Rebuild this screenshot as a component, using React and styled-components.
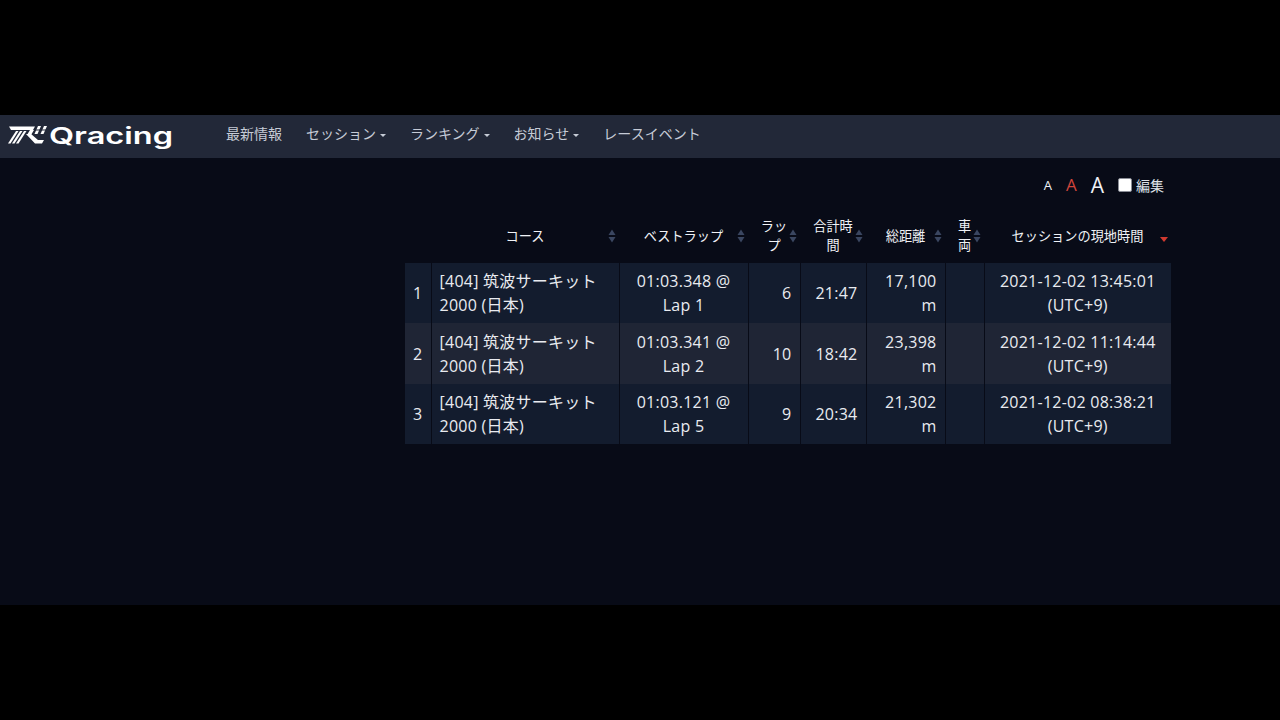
import React from "react";
import styled, { createGlobalStyle } from "styled-components";

const GlobalStyle = createGlobalStyle`
  html, body {
    margin: 0;
    padding: 0;
    background: #000;
  }
  body {
    font-family: "Open Sans", "Noto Sans CJK JP", sans-serif;
  }
`;

const Screen = styled.div`
  width: 1280px;
  height: 720px;
  padding: 115px 0;
  box-sizing: border-box;
  overflow: hidden;
`;

const Frame = styled.div`
  height: 490px;
  background: #080b17;
  display: flex;
  flex-direction: column;
`;

const Nav = styled.nav`
  height: 43px;
  flex-shrink: 0;
  background: #222838;
  display: flex;
  align-items: center;
  padding-left: 8px;
`;

const Brand = styled.div`
  width: 218px;
  display: flex;
  align-items: center;
  flex-shrink: 0;
`;

const BrandText = styled.text`
  font-family: "Inter", "Liberation Sans", sans-serif;
  font-size: 23px;
  font-weight: 600;
  fill: #fff;
`;

const NavItem = styled.a`
  color: #c6cbd6;
  font-size: 14px;
  line-height: 20px;
  margin-right: 24px;
  margin-top: -6px;
  display: flex;
  align-items: center;
  white-space: nowrap;
`;

const Caret = styled.span`
  width: 0;
  height: 0;
  margin-left: 4px;
  margin-top: 3px;
  border-top: 3px solid #c6cbd6;
  border-left: 3px solid transparent;
  border-right: 3px solid transparent;
`;

const Content = styled.main`
  padding: 15px 109px 0 405px;
`;

const Tools = styled.div`
  height: 24px;
  display: flex;
  align-items: center;
  justify-content: flex-end;
  color: #e6e8ee;
  padding-right: 7px;
  margin-bottom: 12px;
`;

const SizeButton = styled.span`
  font-size: ${(p) => p.size}px;
  color: ${(p) => (p.active ? "#d0453c" : "#f0f2f6")};
  margin-right: 14px;
  line-height: 24px;
`;

const Check = styled.span`
  width: 14px;
  height: 14px;
  background: #fff;
  border: 1px solid #8a8d96;
  border-radius: 2px;
  box-sizing: border-box;
  margin-right: 4px;
`;

const EditLabel = styled.span`
  font-size: 14px;
  color: #dfe2e8;
`;

const Table = styled.table`
  width: 766px;
  table-layout: fixed;
  border-collapse: collapse;
  color: #e9ebf0;
`;

const Th = styled.th`
  position: relative;
  height: 54px;
  padding: 0 8px;
  font-size: 13.2px;
  line-height: 19px;
  font-weight: 400;
  text-align: center;
  color: #f0f2f6;
`;

const SortIcon = styled.svg`
  position: absolute;
  right: 3px;
  top: 20px;
  width: 8px;
  height: 14px;
`;

const Row = styled.tr`
  height: ${(p) => (p.alt ? 61 : 60)}px;
  background: ${(p) => (p.alt ? "#1f2535" : "#131c2e")};
`;

const Td = styled.td`
  padding: 0 8px;
  font-size: 16px;
  line-height: 24px;
  letter-spacing: 0.25px;
  text-align: ${(p) => p.align || "left"};
  border-left: 1px solid #080b17;
  &:first-child {
    border-left: none;
  }
`;

const columns = [
  { width: 26, label: "" },
  { width: 188, label: "コース" },
  { width: 129, label: "ベストラップ" },
  { width: 52, label: "ラップ" },
  { width: 66, label: "合計時間" },
  { width: 79, label: "総距離" },
  { width: 39, label: "車両" },
  { width: 187, label: "セッションの現地時間", sorted: true },
];

const sessions = [
  { lap: "01:03.348 @ Lap 1", laps: 6, total: "21:47", dist: "17,100 m", time: "2021-12-02 13:45:01 (UTC+9)" },
  { lap: "01:03.341 @ Lap 2", laps: 10, total: "18:42", dist: "23,398 m", time: "2021-12-02 11:14:44 (UTC+9)" },
  { lap: "01:03.121 @ Lap 5", laps: 9, total: "20:34", dist: "21,302 m", time: "2021-12-02 08:38:21 (UTC+9)" },
];

function Logo() {
  return (
    <svg width="170" height="28" viewBox="0 0 170 28">
      <g fill="#fff">
        <polygon points="1,3.5 27,3.5 25,7 3,7" />
        <polygon points="8,8 10.5,8 2.5,20.5 0,20.5" />
        <polygon points="12,8 14.5,8 6.5,20.5 4,20.5" />
        <polygon points="16,8 18.5,8 10.5,20.5 8,20.5" />
        <polygon points="22,7 26,7 23,12 19,12" />
        <polygon points="18,11 23,11 30,17 36,17 34,20.5 27,20.5" />
        <polygon points="30,3 33,3 29.5,11 26.5,11" />
        <polygon points="36,3 39,3 35.5,11 32.5,11" />
      </g>
      <rect x="26" y="6.5" width="14" height="1" fill="#222838" />
      <BrandText x="41" y="21" textLength="124" lengthAdjust="spacingAndGlyphs">Qracing</BrandText>
    </svg>
  );
}

function Sort({ sorted }) {
  if (sorted) {
    return (
      <SortIcon viewBox="0 0 8 14">
        <polygon points="0,8 8,8 4,13" fill="#d0392f" />
      </SortIcon>
    );
  }
  return (
    <SortIcon viewBox="0 0 8 14">
      <polygon points="4,0.5 7.5,6 0.5,6" fill="#3a4660" />
      <polygon points="0.5,8 7.5,8 4,13.5" fill="#3a4660" />
    </SortIcon>
  );
}

export default function App() {
  return (
    <Screen>
      <GlobalStyle />
      <Frame>
        <Nav>
          <Brand>
            <Logo />
          </Brand>
          <NavItem>最新情報</NavItem>
          <NavItem>セッション<Caret /></NavItem>
          <NavItem>ランキング<Caret /></NavItem>
          <NavItem>お知らせ<Caret /></NavItem>
          <NavItem>レースイベント</NavItem>
        </Nav>
        <Content>
          <Tools>
            <SizeButton size={13}>A</SizeButton>
            <SizeButton size={17} active>A</SizeButton>
            <SizeButton size={21}>A</SizeButton>
            <Check />
            <EditLabel>編集</EditLabel>
          </Tools>
          <Table>
            <colgroup>
              {columns.map((c, i) => <col key={i} width={c.width} />)}
            </colgroup>
            <thead>
              <tr>
                {columns.map((c, i) => (
                  <Th key={i}>
                    {c.label}
                    {c.label && <Sort sorted={c.sorted} />}
                  </Th>
                ))}
              </tr>
            </thead>
            <tbody>
              {sessions.map((s, i) => (
                <Row key={i} alt={i === 1}>
                  <Td>{i + 1}</Td>
                  <Td>[404] 筑波サーキット 2000 (日本)</Td>
                  <Td align="center">{s.lap}</Td>
                  <Td align="right">{s.laps}</Td>
                  <Td align="right">{s.total}</Td>
                  <Td align="right">{s.dist}</Td>
                  <Td />
                  <Td align="center">{s.time}</Td>
                </Row>
              ))}
            </tbody>
          </Table>
        </Content>
      </Frame>
    </Screen>
  );
}
